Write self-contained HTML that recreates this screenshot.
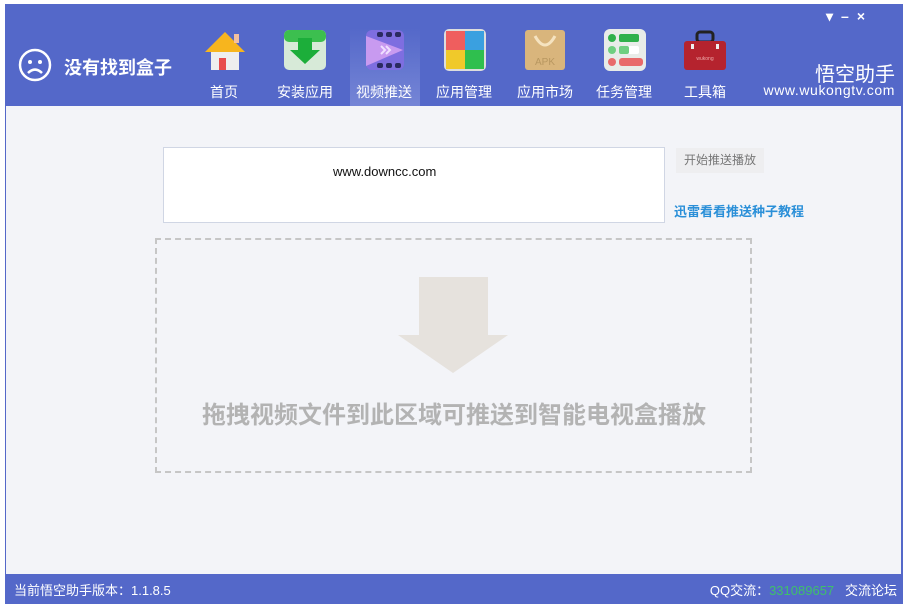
<!DOCTYPE html>
<html><head><meta charset="utf-8"><style>
*{margin:0;padding:0;box-sizing:border-box}
body{width:907px;height:609px;background:#fff;position:relative;overflow:hidden;font-family:"Liberation Sans","Noto Sans CJK SC",sans-serif}
.win{position:absolute;left:5px;top:4px;width:898px;height:600px;background:#5468c9}
.content{position:absolute;left:6px;top:106px;width:895px;height:468px;background:#f3f4f8}
.abs{position:absolute}
.lbl{position:absolute;top:82px;width:80px;text-align:center;color:#fff;font-size:14px}
.ico{position:absolute;top:28px;width:44px;height:44px}
</style></head><body>
<div class="win"></div>
<div class="abs" style="left:350px;top:28px;width:70px;height:78px;background:linear-gradient(#5468c9,#7585d6)"></div>
<svg class="abs" style="left:18px;top:48px" width="34" height="34" viewBox="0 0 34 34"><circle cx="17" cy="17" r="15" fill="none" stroke="#fff" stroke-width="2.5"/><circle cx="12" cy="14" r="2" fill="#fff"/><circle cx="22" cy="14" r="2" fill="#fff"/><path d="M10 25 Q17 18 24 25" fill="none" stroke="#fff" stroke-width="2.5"/></svg>
<div class="abs" style="left:64px;top:54px;color:#fff;font-size:18px;font-weight:bold">没有找到盒子</div>
<svg class="ico" style="left:203px" viewBox="0 0 44 44"><rect x="8" y="20" width="28" height="22" fill="#eee"/><rect x="16" y="30" width="7" height="12" fill="#e84c4c"/><path d="M2 24 L22 4 L42 24Z" fill="#f7b51e"/><rect x="31" y="6" width="5" height="9" fill="#f2c0a0"/></svg>
<svg class="ico" style="left:283px" viewBox="0 0 44 44"><rect x="1" y="2" width="42" height="40" rx="5" fill="#d7ead8"/><rect x="1" y="2" width="42" height="12" rx="5" fill="#3cbf4f"/><path d="M15 10 H29 V22 H37 L22 36 L7 22 H15Z" fill="#1cae3a"/></svg>
<svg class="ico" style="left:363px" viewBox="0 0 44 44"><rect x="3" y="2" width="38" height="40" rx="6" fill="#7e6ee0"/><rect x="14" y="4" width="6" height="5" rx="2" fill="#2a2a60"/><rect x="23" y="4" width="6" height="5" rx="2" fill="#2a2a60"/><rect x="32" y="4" width="6" height="5" rx="2" fill="#2a2a60"/><rect x="14" y="35" width="6" height="5" rx="2" fill="#2a2a60"/><rect x="23" y="35" width="6" height="5" rx="2" fill="#2a2a60"/><rect x="32" y="35" width="6" height="5" rx="2" fill="#2a2a60"/><path d="M3 8 L40 22 L3 38Z" fill="#c89af0"/><path d="M18 18 l4 4 -4 4 M23 18 l4 4 -4 4" stroke="#f0e0ff" stroke-width="2" fill="none"/></svg>
<svg class="ico" style="left:443px" viewBox="0 0 44 44"><rect x="1" y="1" width="42" height="42" rx="5" fill="#ddd"/><rect x="3" y="3" width="19" height="19" fill="#ef5e5e"/><rect x="22" y="3" width="19" height="19" fill="#3aa0e0"/><rect x="3" y="22" width="19" height="19" fill="#f0c92a"/><rect x="22" y="22" width="19" height="19" fill="#2fbf4e"/></svg>
<svg class="ico" style="left:523px" viewBox="0 0 44 44"><rect x="2" y="2" width="40" height="40" rx="3" fill="#d9b57c"/><path d="M12 8 Q22 26 32 8" fill="none" stroke="#f5e3c0" stroke-width="3"/><text x="22" y="37" font-size="10" fill="#b89760" text-anchor="middle" font-family="Liberation Sans">APK</text></svg>
<svg class="ico" style="left:603px" viewBox="0 0 44 44"><rect x="1" y="1" width="42" height="42" rx="6" fill="#e8ece8"/><circle cx="9" cy="10" r="4" fill="#2fb14a"/><rect x="16" y="6" width="20" height="8" rx="2" fill="#2fb14a"/><circle cx="9" cy="22" r="4" fill="#6fcf80"/><rect x="16" y="18" width="20" height="8" rx="2" fill="#fff"/><rect x="16" y="18" width="10" height="8" rx="2" fill="#6fcf80"/><circle cx="9" cy="34" r="4" fill="#e86a6a"/><rect x="16" y="30" width="24" height="8" rx="3" fill="#e86a6a"/></svg>
<svg class="ico" style="left:683px" viewBox="0 0 44 44"><rect x="14" y="4" width="16" height="10" rx="3" fill="none" stroke="#222" stroke-width="3"/><rect x="1" y="13" width="42" height="29" rx="3" fill="#b5232e"/><rect x="8" y="16" width="3" height="5" fill="#eee"/><rect x="33" y="16" width="3" height="5" fill="#eee"/><text x="22" y="32" font-size="5" fill="#eaa" text-anchor="middle" font-family="Liberation Sans">wukong</text></svg>
<div class="lbl" style="left:184px">首页</div>
<div class="lbl" style="left:265px">安装应用</div>
<div class="lbl" style="left:344px">视频推送</div>
<div class="lbl" style="left:424px">应用管理</div>
<div class="lbl" style="left:505px">应用市场</div>
<div class="lbl" style="left:584px">任务管理</div>
<div class="lbl" style="left:665px">工具箱</div>
<div class="abs" style="left:826px;top:8px;color:#fff;font-size:14px;font-weight:bold;letter-spacing:8px">&#9662;&#8211;&#215;</div>
<div class="abs" style="right:12px;top:58px;color:#fff;font-size:20px">悟空助手</div>
<div class="abs" style="right:12px;top:82px;color:#fff;font-size:14px;letter-spacing:0.6px">www.wukongtv.com</div>
<div class="content"></div>
<div class="abs" style="left:163px;top:147px;width:502px;height:76px;background:#fff;border:1px solid #d0d6e4"></div>
<div class="abs" style="left:333px;top:164px;font-size:13px;color:#111">www.downcc.com</div>
<div class="abs" style="left:676px;top:148px;width:88px;height:25px;background:#eeeef0;color:#777;font-size:12px;text-align:center;line-height:25px">开始推送播放</div>
<div class="abs" style="left:674px;top:201px;color:#2a8fd8;font-size:13px;font-weight:bold">迅雷看看推送种子教程</div>
<div class="abs" style="left:155px;top:238px;width:597px;height:235px;border:2px dashed #c6c6c6"></div>
<div class="abs" style="left:419px;top:277px;width:69px;height:59px;background:#e6e2dd"></div>
<div class="abs" style="left:398px;top:335px;width:0;height:0;border-left:55px solid transparent;border-right:55px solid transparent;border-top:38px solid #e6e2dd"></div>
<div class="abs" style="left:150px;top:395px;width:608px;text-align:center;color:#b3b3b3;font-size:24px;font-weight:bold">拖拽视频文件到此区域可推送到智能电视盒播放</div>
<div class="abs" style="left:14px;top:580px;color:#fff;font-size:13px">当前悟空助手版本：1.1.8.5</div>
<div class="abs" style="right:10px;top:580px;color:#fff;font-size:13px">QQ交流：<span style="color:#3fc06a">331089657</span>&nbsp;&nbsp;&nbsp;交流论坛</div>
</body></html>
